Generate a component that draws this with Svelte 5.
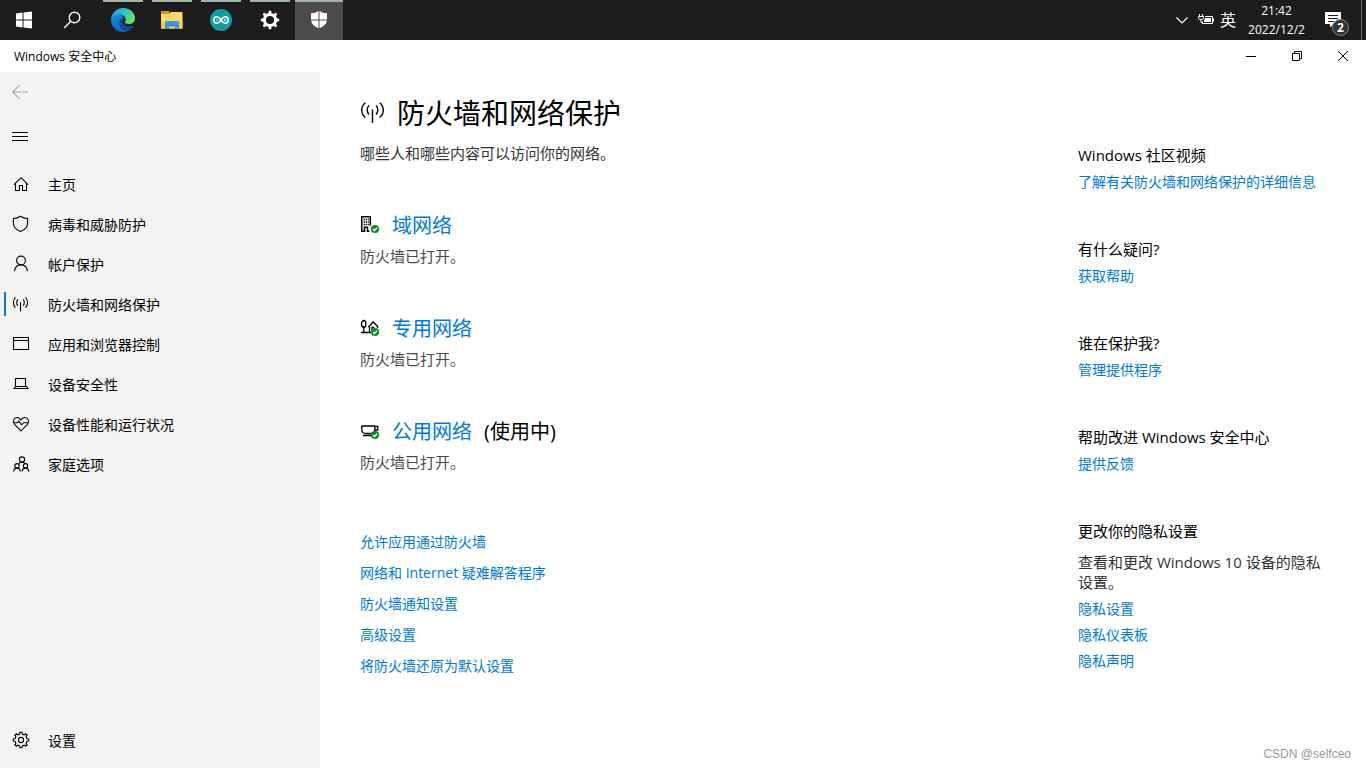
<script>
  const navItems = [
    { label: '主页', icon: 'home' },
    { label: '病毒和威胁防护', icon: 'shield' },
    { label: '帐户保护', icon: 'person' },
    { label: '防火墙和网络保护', icon: 'antenna', active: true },
    { label: '应用和浏览器控制', icon: 'window' },
    { label: '设备安全性', icon: 'laptop' },
    { label: '设备性能和运行状况', icon: 'heart' },
    { label: '家庭选项', icon: 'family' }
  ];

  const networks = [
    { name: '域网络', icon: 'building', status: '防火墙已打开。' },
    { name: '专用网络', icon: 'house', status: '防火墙已打开。' },
    { name: '公用网络', icon: 'cup', status: '防火墙已打开。', note: '(使用中)' }
  ];

  const actions = [
    '允许应用通过防火墙',
    '网络和 Internet 疑难解答程序',
    '防火墙通知设置',
    '高级设置',
    '将防火墙还原为默认设置'
  ];

  const help = [
    { title: 'Windows 社区视频', links: ['了解有关防火墙和网络保护的详细信息'] },
    { title: '有什么疑问?', links: ['获取帮助'] },
    { title: '谁在保护我?', links: ['管理提供程序'] },
    { title: '帮助改进 Windows 安全中心', links: ['提供反馈'] },
    {
      title: '更改你的隐私设置',
      text: '查看和更改 Windows 10 设备的隐私设置。',
      links: ['隐私设置', '隐私仪表板', '隐私声明']
    }
  ];

  function gearPath(cx, cy, outer, inner, teeth, width) {
    const points = [];
    const step = (Math.PI * 2) / teeth;
    for (let i = 0; i < teeth; i++) {
      const mid = i * step - Math.PI / 2;
      for (const [r, a] of [
        [inner, -width * 1.35],
        [outer, -width * 0.9],
        [outer, width * 0.9],
        [inner, width * 1.35]
      ]) {
        const angle = mid + a * step;
        points.push(`${(cx + r * Math.cos(angle)).toFixed(2)} ${(cy + r * Math.sin(angle)).toFixed(2)}`);
      }
    }
    return `M${points.join('L')}Z`;
  }
</script>

{#snippet check()}
  <circle cx="15" cy="13" r="4.100" fill="#10892a" stroke="none" />
  <path d="M13 13.100l1.400 1.400 2.700-2.800" stroke="#fff" stroke-width="1.300" />
{/snippet}

{#snippet glyph(name)}
  <svg class="glyph" viewBox="0 0 20 20" aria-hidden="true">
    {#if name === 'home'}
      <path d="M3 10.700L10 3.700l7 7M4.500 9.500v7h4v-5h3v5h4v-7" />
    {:else if name === 'shield'}
      <path d="M9.500 2.300c2.200 1.600 4.600 2.100 7.100 2.200v4.700c0 4-2.700 6.500-7.100 8.300-4.400-1.800-7.100-4.300-7.100-8.300V4.500c2.500-.1 4.900-.6 7.100-2.200z" />
    {:else if name === 'person'}
      <circle cx="10" cy="6.500" r="4.400" />
      <path d="M3.500 17.200c.4-3.800 3-6.300 6.500-6.300s6.100 2.500 6.500 6.300" />
    {:else if name === 'antenna'}
      <path d="M9.500 8v9.500" />
      <path d="M6.900 5.300c-1.600 1.600-1.600 4.800 0 6.400M12.100 5.300c1.600 1.600 1.600 4.800 0 6.400M4.500 3.300C1.700 6 1.700 11 4.500 13.700M14.500 3.300c2.800 2.700 2.800 7.700 0 10.400" />
    {:else if name === 'window'}
      <path d="M2.500 3.500h15v12h-15zM2.500 6.500h15" />
    {:else if name === 'laptop'}
      <path d="M4.500 4.500h10v8h-10zM4.500 12.500l-1.500 2h14l-1.500-2z" />
    {:else if name === 'heart'}
      <path d="M10 16.800L3.500 10.300C1.200 7.700 2.800 3.500 6 3.500c1.700 0 2.900 1 4 2.300 1.100-1.300 2.300-2.300 4-2.300 3.200 0 4.800 4.200 2.500 6.800z" />
      <path d="M2.700 8.700h3.800l1.300-1.500 2.700 3.600 2.300-2.100h4.500" />
    {:else if name === 'family'}
      <circle cx="11" cy="5.500" r="2.600" />
      <circle cx="6" cy="11.800" r="2.200" />
      <circle cx="14.500" cy="11.800" r="2.200" />
      <path d="M2.600 17.500c.2-2.200 1.500-3.400 3.400-3.400s3.200 1.200 3.400 3.400M11.100 17.500c.2-2.200 1.500-3.400 3.400-3.400s3.200 1.200 3.400 3.400M7.500 9.800c.7-1 1.800-1.700 3.500-1.700 1.300 0 2.200.5 2.800 1.300" />
    {:else if name === 'settings'}
      <path d={gearPath(10, 10, 7.8, 6.1, 8, 0.2)} />
      <circle cx="10" cy="10" r="2.600" />
    {:else if name === 'building'}
      <path stroke-width="1.500" d="M1.800 16V.7h8.500v9M1.800 15.300h2.700v-4h3v4h2" />
      <path stroke-width="1.300" d="M3.700 3.500h1.300M5.700 3.500h1.300M7.700 3.500h1.200M3.700 6h1.300M5.700 6h1.300M7.700 6h1.200M3.700 8.500h1.300M5.700 8.500h1.300M7.700 8.500h1.200" />
      {@render check()}
    {:else if name === 'house'}
      <g stroke-width="1.300">
        <ellipse cx="3.700" cy="5" rx="2.200" ry="3.500" />
        <path d="M3.700 7v6.500M1 13.500h11M8.300 8l4.900-5 4.900 5M9.500 7v6M17.500 7.500V9M12 12V8.500h2.500" />
      </g>
      {@render check()}
    {:else if name === 'cup'}
      <path stroke-width="1.300" d="M1.800 4h13v3.500c0 3-1.200 4-4 4H6c-2.800 0-4.200-1-4.200-4zM14.800 4.500h3v3.500h-3M3 13.500h9" />
      {@render check()}
    {/if}
  </svg>
{/snippet}

<div class="screen">
  <header class="taskbar">
    <button class="task" aria-label="开始">
      <svg viewBox="0 0 24 24" fill="#fff"><path d="M4 5.500l6.500-.9v6.900H4zM11.500 4.500L20 3.500v8h-8.500zM4 12.500h6.500v6.900L4 18.500zM11.500 12.500H20v8l-8.500-1z" /></svg>
    </button>
    <button class="task" aria-label="搜索">
      <svg viewBox="0 0 24 24" fill="none" stroke="#fff" stroke-width="1.400"><circle cx="14.500" cy="9.500" r="5.300" /><path d="M10.700 13.300L4.200 19.900" /></svg>
    </button>
    <div class="apps">
      <button class="task running" aria-label="Edge">
        <svg viewBox="0 0 24 24">
          <defs>
            <linearGradient id="edgeTop" x1="0" y1=".3" x2="1" y2=".6"><stop offset="0" stop-color="#239bd8" /><stop offset=".5" stop-color="#2ac1d2" /><stop offset="1" stop-color="#72e35a" /></linearGradient>
            <linearGradient id="edgeBody" x1="0" y1="0" x2=".4" y2="1"><stop offset="0" stop-color="#2191d7" /><stop offset="1" stop-color="#0a61c5" /></linearGradient>
          </defs>
          <path fill="url(#edgeBody)" d="M0 12C0 6 4 5.500 9 6.500l4 3c-3 1-3 6.500 1 8.300 3 1.400 5.800.7 8 .2C20 21.900 16.300 24 12 24 5.400 24 0 18.600 0 12z" />
          <path fill="url(#edgeTop)" d="M.1 10.700C.8 4.700 5.800 0 12 0c6.700 0 12 4.700 12 10.200 0 3.800-2.700 5.800-6.300 5.800-2.500 0-4-.8-4-1.700 0-.7 1-1 1-2.600 0-2.700-3-5.200-7-5.200C4 6.500 1 8.300.1 10.700z" />
          <path fill="#144b91" d="M8.300 14.500c.2-2.400 1.700-4.300 4-5.300-1.400 1.900-1.200 6.300 2.300 8.300 2.400 1.400 5.200 1.200 7.700.2.600-.2.700.2.400.7-2 3.300-5.500 4.300-8.700 3.600-3.500-.8-5.800-4.200-5.700-7.500z" />
        </svg>
      </button>
      <button class="task running" aria-label="文件资源管理器">
        <svg viewBox="0 0 24 24">
          <path fill="#df9700" d="M1 3h8l2 3v3H1z" />
          <path fill="#ffd768" d="M1 6h8.500l1.500-2H22.500v16.500H1z" />
          <path fill="#fbc84b" d="M1 14h21.500v6.500H1z" />
          <path fill="#3d98df" d="M5 13h14v8h-4v-4H9v4H5z" />
          <path fill="#2a7dc0" d="M9 17h6v1.200H9z" />
        </svg>
      </button>
      <button class="task running" aria-label="Arduino">
        <svg viewBox="0 0 24 24" fill="none">
          <circle cx="12" cy="12" r="11" fill="#129ba1" />
          <path stroke="#fff" stroke-width="1.500" d="M12 12c-1.400-2.200-2.400-3.200-4-3.200a3.200 3.200 0 0 0 0 6.400c1.600 0 2.600-1 4-3.200s2.400-3.200 4-3.200a3.200 3.200 0 0 1 0 6.400c-1.600 0-2.600-1-4-3.200z" />
          <path stroke="#fff" stroke-width=".8" d="M6.900 12h2.200M14.900 12h2.200M16 10.900v2.200" />
        </svg>
      </button>
      <button class="task running" aria-label="设置">
        <svg viewBox="0 0 24 24" fill="#fff" fill-rule="evenodd"><path d={gearPath(12, 12, 9.3, 7.2, 8, 0.19) + 'M16 12a4 4 0 1 0-8 0a4 4 0 1 0 8 0Z'} /></svg>
      </button>
      <button class="task running current" aria-label="Windows 安全中心">
        <svg viewBox="0 0 24 24" fill="#fff"><path d="M11.500 3v8.500H4V5.300C6.800 5.200 9.200 4.600 11.500 3zM12.500 3c2.300 1.600 4.700 2.200 7.500 2.300v6.200h-7.500zM4.100 12.500h7.400v7.700c-4.300-1.700-7-4.200-7.400-7.700zM12.500 12.500h7.400c-.4 3.500-3.100 6-7.400 7.700z" /></svg>
      </button>
    </div>
    <div class="tray">
      <button class="tray-button" aria-label="显示隐藏的图标">
        <svg viewBox="0 0 16 16" fill="none" stroke="#fff" stroke-width="1.200"><path d="M2.500 5.500L8 11l5.500-5.500" /></svg>
      </button>
      <button class="tray-button" aria-label="电源">
        <svg viewBox="0 0 16 16" fill="none" stroke="#fff"><path d="M7 4.500h7.500v7h-10V9.500M15.500 6.500v3M1.500 2v2M4.500 2v2M.5 4.500h5v1.300c0 1.200-1 1.700-2.500 1.700S.5 7 .5 5.800zM3 8v2.500h1.500" /><path fill="#fff" stroke="none" d="M7 6h6v4H6V8z" /></svg>
      </button>
      <button class="language">英</button>
      <button class="clock"><time>21:42</time><span>2022/12/2</span></button>
      <button class="notices" aria-label="2 个新通知">
        <svg viewBox="0 0 16 16"><path fill="#fff" d="M0 0h16v12H8.500L5 15.500V12H0z" /><path stroke="#1c1c1c" d="M3 3.500h10M3 6.500h10M3 9.500h6" /></svg>
        <span class="badge">2</span>
      </button>
    </div>
  </header>

  <div class="titlebar">
    <span class="window-title">Windows 安全中心</span>
    <div class="controls">
      <button aria-label="最小化"><svg viewBox="0 0 12 12"><path d="M1 6.500h10" /></svg></button>
      <button aria-label="还原"><svg viewBox="0 0 12 12"><path d="M1.500 3.500h7v7h-7zM3.500 3.500v-2h7v7h-2" /></svg></button>
      <button aria-label="关闭"><svg viewBox="0 0 12 12"><path d="M1 1l10 10M11 1L1 11" /></svg></button>
    </div>
  </div>

  <div class="window">
    <aside class="sidebar">
      <button class="icon-button back" aria-label="返回">
        <svg class="glyph" viewBox="0 0 20 20"><path d="M18 10H2.500M10 2.800L2.500 10l7.500 7.200" /></svg>
      </button>
      <button class="icon-button" aria-label="打开导航">
        <svg class="glyph" viewBox="0 0 20 20"><path d="M2 6.500h16M2 10.500h16M2 14.500h16" /></svg>
      </button>
      <nav>
        {#each navItems as item}
          <a href="#{item.icon}" class="nav-item" class:active={item.active}>
            {@render glyph(item.icon)}
            <span>{item.label}</span>
          </a>
        {/each}
      </nav>
      <a href="#settings" class="nav-item settings">
        {@render glyph('settings')}
        <span>设置</span>
      </a>
    </aside>

    <main>
      <section class="content">
        <h1>
          <svg class="title-icon" viewBox="0 0 28 28" aria-hidden="true"><path d="M13.500 10.500V24M10 6.500c-2.400 2.300-2.400 6.700 0 9M17 6.500c2.400 2.300 2.400 6.700 0 9M6.300 3.800C1.500 8 1.500 14.500 6.300 18.500M20.700 3.800c4.800 4.200 4.800 10.700 0 14.700" /></svg>
          <span>防火墙和网络保护</span>
        </h1>
        <p class="lead">哪些人和哪些内容可以访问你的网络。</p>
        <div class="networks">
          {#each networks as network}
            <article>
              <h2>
                {@render glyph(network.icon)}
                <a href="#{network.icon}">{network.name}</a>
                {#if network.note}<span>{network.note}</span>{/if}
              </h2>
              <p>{network.status}</p>
            </article>
          {/each}
        </div>
        <div class="actions">
          {#each actions as action}
            <a href="#action">{action}</a>
          {/each}
        </div>
      </section>

      <aside class="help">
        {#each help as group}
          <section>
            <h3>{group.title}</h3>
            {#if group.text}<p>{group.text}</p>{/if}
            {#each group.links as link}
              <a href="#help">{link}</a>
            {/each}
          </section>
        {/each}
      </aside>
    </main>
  </div>
  <span class="watermark">CSDN @selfceo</span>
</div>

<style>
  :global(body) {
    margin: 0;
  }

  .screen {
    position: relative;
    display: flex;
    flex-direction: column;
    min-height: 100vh;
    background: #fff;
    color: #000;
    font: 14px/20px "Open Sans", "Noto Sans CJK SC", sans-serif;
  }

  button {
    padding: 0;
    border: 0;
    background: none;
    color: inherit;
    font: inherit;
  }

  svg {
    display: block;
    flex: none;
  }

  a {
    color: #0078d7;
    text-decoration: none;
  }

  h1,
  h2,
  h3,
  p {
    margin: 0;
    font-weight: 400;
  }

  .taskbar {
    display: flex;
    height: 40px;
    background: #1c1c1c;
    color: #fff;
  }

  .task {
    display: grid;
    place-items: center;
    width: 48px;
    height: 40px;
  }

  .task svg {
    width: 24px;
    height: 24px;
  }

  .apps {
    display: flex;
    gap: 1px;
    margin-left: 3px;
  }

  .running {
    background: linear-gradient(#9fb5a3, #9fb5a3) center top / 40px 2px no-repeat;
  }

  .current {
    background-color: #4b4b4b;
    background-size: 100% 2px;
  }

  .tray {
    display: flex;
    align-items: center;
    margin-left: auto;
    margin-right: 4px;
    border-right: 1px solid #6a6a6a;
  }

  .tray-button {
    display: grid;
    place-items: center;
    width: 24px;
    height: 40px;
  }

  .tray-button svg {
    width: 16px;
    height: 16px;
  }

  .language {
    width: 20px;
    font-size: 16px;
  }

  .clock {
    display: flex;
    flex-direction: column;
    width: 77px;
    font-size: 12px;
    line-height: 19px;
    text-align: center;
  }

  .notices {
    position: relative;
    width: 46px;
    height: 40px;
    padding-left: 10px;
  }

  .notices svg {
    width: 16px;
    height: 16px;
  }

  .badge {
    position: absolute;
    left: 17px;
    top: 19px;
    box-sizing: border-box;
    width: 17px;
    height: 17px;
    border: 1px solid #8a8a8a;
    border-radius: 50%;
    background: #333;
    font-size: 12px;
    font-weight: 700;
    line-height: 15px;
    text-align: center;
  }

  .titlebar {
    display: flex;
    align-items: center;
    justify-content: space-between;
    height: 32px;
    padding-left: 14px;
    font-size: 12px;
  }

  .window-title,
  .nav-item span {
    padding-top: 2px;
  }

  .controls {
    display: flex;
  }

  .controls button {
    display: grid;
    place-items: center;
    width: 46px;
    height: 32px;
  }

  .controls svg {
    width: 12px;
    height: 12px;
    fill: none;
    stroke: #000;
  }

  .window {
    display: flex;
    flex: 1;
  }

  .sidebar {
    display: flex;
    flex: none;
    flex-direction: column;
    box-sizing: border-box;
    width: 320px;
    padding-bottom: 8px;
    background: #f3f3f3;
  }

  .glyph {
    width: 20px;
    height: 20px;
    fill: none;
    stroke: #000;
    stroke-width: 1.1;
  }

  .icon-button {
    display: grid;
    place-items: center;
    width: 40px;
    height: 40px;
    margin-bottom: 4px;
  }

  .back .glyph {
    stroke: #aaa;
  }

  nav {
    margin-top: 4px;
  }

  .nav-item {
    display: flex;
    align-items: center;
    gap: 17px;
    height: 40px;
    padding-left: 11px;
    color: #000;
  }

  .active {
    margin-left: 4px;
    padding-left: 7px;
    background: linear-gradient(#0078d7, #0078d7) left center / 2px 24px no-repeat;
  }

  .settings {
    margin-top: auto;
  }

  main {
    display: flex;
    flex: 1;
    justify-content: space-between;
    padding: 23px 40px 32px 40px;
  }

  h1 {
    display: flex;
    align-items: center;
    gap: 10px;
    font-size: 28px;
    line-height: 36px;
  }

  .title-icon {
    width: 28px;
    height: 28px;
    margin-left: -1px;
    fill: none;
    stroke: #000;
    stroke-width: 1.4;
  }

  .lead {
    margin-top: 12px;
    color: #333;
    font-size: 15px;
  }

  .networks {
    display: grid;
    gap: 48px;
    margin-top: 48px;
  }

  h2 {
    display: flex;
    align-items: center;
    gap: 12px;
    font-size: 20px;
    line-height: 30px;
  }

  article p {
    margin-top: 5px;
    color: #4a4a4a;
    font-size: 15px;
  }

  .actions {
    display: flex;
    flex-direction: column;
    align-items: flex-start;
    gap: 11px;
    margin-top: 60px;
  }

  .help {
    display: flex;
    flex: none;
    flex-direction: column;
    gap: 47px;
    width: 248px;
    padding-top: 50px;
  }

  .help section {
    display: flex;
    flex-direction: column;
    align-items: flex-start;
    gap: 6px;
  }

  h3 {
    margin-bottom: 1px;
    font-size: 15px;
    line-height: 20px;
  }

  .help p {
    padding-top: 4px;
    padding-bottom: 1px;
    color: #333;
    font-size: 15px;
  }

  .watermark {
    position: absolute;
    right: 15px;
    bottom: 4px;
    color: #999;
    font: 12px/20px "Liberation Sans", sans-serif;
  }
</style>
